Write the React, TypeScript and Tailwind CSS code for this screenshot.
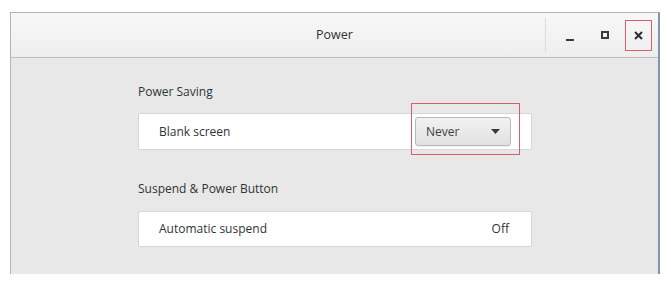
import React from "react";

const font = { fontFamily: '"Open Sans", "Noto Sans", sans-serif' };

const Row = ({ children }: { children: React.ReactNode }) => (
  <div className="flex items-center justify-between w-[394px] bg-white border border-[#d6d6d6] rounded-[2px] pl-[20px] pr-[20px]">
    {children}
  </div>
);

export default function App() {
  return (
    <div className="w-[671px] h-[282px] bg-white overflow-hidden" style={font}>
      <div className="ml-[10px] mt-[12px] w-[650px] h-[262px] flex flex-col border-l border-t border-[#b4b4b4] border-r-[2px] border-r-[#7d97ab] bg-[#e8e8e8]">
        {/* header bar */}
        <div className="relative h-[45px] shrink-0 flex items-center bg-gradient-to-b from-[#f8f8f8] to-[#eeeeee] border-b border-[#bfbfbf]">
          <div className="absolute inset-0 flex items-center justify-center text-[12.5px] text-[#2e3436]">
            Power
          </div>
          <div className="ml-auto flex items-center h-full">
            <div className="w-px h-[34px] bg-[#dcdcdc] mr-[10px]" />
            <div className="w-[28px] h-[30px] flex items-end justify-center pb-[9px]">
              <div className="w-[8px] h-[2px] bg-[#3a3a3a]" />
            </div>
            <div className="ml-[7px] w-[28px] h-[30px] flex items-center justify-center">
              <div className="w-[8px] h-[8px] border-[2px] border-[#3a3a3a]" />
            </div>
            <div className="ml-[6px] mr-[6px] w-[27px] h-[31px] flex items-center justify-center border border-[#d9606a]">
              <svg width="9" height="9" viewBox="0 0 9 9">
                <path d="M1 1 L8 8 M8 1 L1 8" stroke="#2e2e2e" strokeWidth="2" />
              </svg>
            </div>
          </div>
        </div>

        {/* content */}
        <div className="pl-[127px] pt-[24px] text-[12px] text-[#2e3436]">
          <div className="h-[20px] leading-[20px]">Power Saving</div>
          <div className="mt-[11px]">
            <Row>
              <div className="h-[35px] flex items-center">Blank screen</div>
              <div className="relative">
                <div className="w-[96px] h-[29px] flex items-center justify-between px-[10px] rounded-[3px] border border-[#b9b9b9] bg-gradient-to-b from-[#f2f2f2] to-[#e1e1e1] text-[#3b3f41] shadow-[0_1px_0_rgba(0,0,0,0.06)]">
                  <span>Never</span>
                  <svg width="9" height="5" viewBox="0 0 9 5">
                    <path d="M0 0 L9 0 L4.5 5 Z" fill="#3a3a3a" />
                  </svg>
                </div>
                <div className="absolute left-[-4px] top-[-14px] w-[109px] h-[52px] border border-[#d9606a] pointer-events-none" />
              </div>
            </Row>
          </div>
          <div className="mt-[29px] h-[20px] leading-[20px]">Suspend &amp; Power Button</div>
          <div className="mt-[12px]">
            <Row>
              <div className="h-[34px] flex items-center">Automatic suspend</div>
              <div className="mr-[2px]">Off</div>
            </Row>
          </div>
        </div>
      </div>
    </div>
  );
}
